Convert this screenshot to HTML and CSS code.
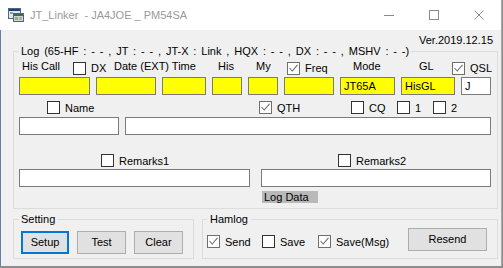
FILE: index.html
```html
<!DOCTYPE html>
<html>
<head>
<meta charset="utf-8">
<link rel="stylesheet" href="styles.css">
</head>
<body>
<div class="window">
  <div class="titlebar">
    <svg class="appicon" width="16" height="16" viewBox="0 0 16 16">
      <rect x="0.5" y="1.5" width="12" height="10" fill="#e3e8ef" stroke="#55657c"/>
      <rect x="1" y="2" width="11" height="2" fill="#1e3d8c"/>
      <rect x="2" y="5" width="3" height="2" fill="#8aa0c0"/>
      <rect x="5.5" y="6.5" width="10" height="8" fill="#cfd6cc" stroke="#55657c"/>
      <rect x="6" y="7" width="9" height="2" fill="#3b6f45"/>
      <rect x="7" y="10" width="3" height="3" fill="#86b884"/>
      <rect x="11" y="10" width="3" height="3" fill="#a9b4a6"/>
    </svg>
    <span class="title">JT_Linker&nbsp; - JA4JOE _ PM54SA</span>
    <div class="controls">
      <span class="ctl"><svg width="10" height="10" viewBox="0 0 10 10"><path d="M0 5.5H10" stroke="#8a8a8a" stroke-width="1"/></svg></span>
      <span class="ctl"><svg width="10" height="10" viewBox="0 0 10 10"><rect x="0.5" y="0.5" width="9" height="9" fill="none" stroke="#8a8a8a"/></svg></span>
      <span class="ctl"><svg width="10" height="10" viewBox="0 0 10 10"><path d="M0.5 0.5L9.5 9.5M9.5 0.5L0.5 9.5" stroke="#8a8a8a" stroke-width="1"/></svg></span>
    </div>
  </div>
  <div class="client">
    <div class="ver">Ver.2019.12.15</div>
    <fieldset class="group log">
      <legend class="loglegend">Log (65-HF : - - , JT : - - , JT-X : Link , HQX : - - , DX : - - , MSHV : - -)</legend>
      <div class="row r1">
        <span class="c-call">His Call</span>
        <span class="c-dx chk"><span class="cb"></span>DX</span>
        <span class="c-date">Date (EXT) Time</span>
        <span class="c-his">His</span>
        <span class="c-my">My</span>
        <span class="c-freq chk"><span class="cb on"><svg width="11" height="11" viewBox="0 0 11 11"><path d="M1.5 5L4.2 8L9.5 1.8" fill="none" stroke="#6e6e6e" stroke-width="1.1"/></svg></span>Freq</span>
        <span class="c-mode">Mode</span>
        <span class="c-gl">GL</span>
        <span class="c-qsl chk"><span class="cb on"><svg width="11" height="11" viewBox="0 0 11 11"><path d="M1.5 5L4.2 8L9.5 1.8" fill="none" stroke="#6e6e6e" stroke-width="1.1"/></svg></span>QSL</span>
      </div>
      <div class="row r2">
        <span class="fld y f1"></span>
        <span class="fld y f2"></span>
        <span class="fld y f3"></span>
        <span class="fld y f4"></span>
        <span class="fld y f5"></span>
        <span class="fld y f6"></span>
        <span class="fld y f7">JT65A</span>
        <span class="fld y f8">HisGL</span>
        <span class="fld f9">J</span>
      </div>
      <div class="row r3">
        <span class="c-name chk"><span class="cb"></span>Name</span>
        <span class="c-qth chk"><span class="cb on"><svg width="11" height="11" viewBox="0 0 11 11"><path d="M1.5 5L4.2 8L9.5 1.8" fill="none" stroke="#6e6e6e" stroke-width="1.1"/></svg></span>QTH</span>
        <span class="c-cq chk"><span class="cb"></span>CQ</span>
        <span class="c-1 chk"><span class="cb"></span>1</span>
        <span class="c-2 chk"><span class="cb"></span>2</span>
      </div>
      <div class="row r4">
        <span class="fld g1"></span>
        <span class="fld g2"></span>
      </div>
      <div class="remarks">
        <div class="rcol">
          <span class="chk center"><span class="cb"></span>Remarks1</span>
          <span class="fld wide"></span>
        </div>
        <div class="rcol">
          <span class="chk center"><span class="cb"></span>Remarks2</span>
          <span class="fld wide"></span>
          <span class="logdata">Log Data</span>
        </div>
      </div>
    </fieldset>
    <div class="bottom">
      <fieldset class="group setting">
        <legend>Setting</legend>
        <div class="btns">
          <button class="btn focus b-setup">Setup</button>
          <button class="btn b-test">Test</button>
          <button class="btn b-clear">Clear</button>
        </div>
      </fieldset>
      <fieldset class="group hamlog">
        <legend>Hamlog</legend>
        <div class="hrow">
          <span class="chk h-send"><span class="cb on"><svg width="11" height="11" viewBox="0 0 11 11"><path d="M1.5 5L4.2 8L9.5 1.8" fill="none" stroke="#6e6e6e" stroke-width="1.1"/></svg></span>Send</span>
          <span class="chk h-save"><span class="cb"></span>Save</span>
          <span class="chk h-msg"><span class="cb on"><svg width="11" height="11" viewBox="0 0 11 11"><path d="M1.5 5L4.2 8L9.5 1.8" fill="none" stroke="#6e6e6e" stroke-width="1.1"/></svg></span>Save(Msg)</span>
          <button class="btn b-resend">Resend</button>
        </div>
      </fieldset>
    </div>
  </div>
</div>
</body>
</html>
```
FILE: styles.css
```css
html, body {
  margin: 0;
  padding: 0;
}
body {
  background: #8e8e8e;
  font-family: "Liberation Sans", Arial, sans-serif;
  font-size: 11px;
  color: #000;
  width: 503px;
  height: 268px;
  overflow: hidden;
}
.window {
  width: 502px;
  height: 266px;
  box-sizing: border-box;
  border-right: 1px solid #a9a9a9;
  background: #f0f0f0;
  display: flex;
  flex-direction: column;
}
.titlebar {
  height: 30px;
  flex-shrink: 0;
  background: #fff;
  display: flex;
  align-items: center;
}
.appicon {
  margin-left: 8px;
  flex-shrink: 0;
}
.title {
  margin-left: 6px;
  color: #9a9a9a;
  font-size: 11px;
  white-space: nowrap;
}
.controls {
  margin-left: auto;
  display: flex;
  height: 30px;
}
.ctl {
  width: 45px;
  height: 30px;
  display: flex;
  align-items: center;
  justify-content: center;
}
.client {
  flex: 1;
  border-left: 1px solid #5b80b0;
  padding: 4px 3px 0 12px;
  box-sizing: border-box;
}
.ver {
  text-align: right;
  line-height: 13px;
  padding-right: 5px;
  margin-bottom: -2px;
}
.group {
  margin: 0;
  border: 1px solid #dcdcdc;
  box-sizing: border-box;
  min-width: 0;
}
.group legend {
  padding: 0 2px;
  line-height: 13px;
  white-space: nowrap;
}
.group .loglegend {
  word-spacing: 1.8px;
}
.log {
  width: 485px;
  padding: 2px 5px 5px 5px;
}
.row {
  display: flex;
}
.chk {
  display: inline-flex;
  align-items: center;
  white-space: nowrap;
}
.cb {
  width: 13px;
  height: 13px;
  box-sizing: border-box;
  border: 1px solid #333;
  background: #fff;
  margin-right: 5px;
  display: inline-flex;
  align-items: center;
  justify-content: center;
  flex-shrink: 0;
}
.cb.on {
  border-color: #6e6e6e;
}
.r1 {
  height: 15px;
  line-height: 13px;
  align-items: flex-start;
}
.r1 > span {
  flex-shrink: 0;
  white-space: nowrap;
}
.r1 .chk {
  margin-top: 2px;
  height: 13px;
  line-height: 13px;
  align-items: flex-start;
}
.c-call { width: 54px; padding-left: 3px; box-sizing: border-box; }
.c-dx { width: 41px; }
.c-date { width: 104px; }
.c-his { width: 38px; }
.c-my { width: 31px; }
.c-freq { width: 66px; }
.c-mode { width: 66px; }
.c-gl { width: 33px; }

.fld {
  display: block;
  height: 18px;
  box-sizing: border-box;
  border: 1px solid #7a7a7a;
  background: #fff;
  padding: 0 3px;
  line-height: 16px;
  white-space: nowrap;
  overflow: hidden;
  flex-shrink: 0;
}
.fld.y {
  background: #ffff00;
}
.r2 {
  margin-top: 2px;
  gap: 6px;
}
.f1 { width: 71px; }
.f2 { width: 60px; }
.f3 { width: 44px; }
.f4 { width: 30px; }
.f5 { width: 30px; }
.f6 { width: 50px; }
.f7 { width: 55px; }
.f8 { width: 54px; }
.f9 { width: 30px; }

.r3 {
  margin-top: 6px;
  height: 13px;
  align-items: center;
}
.c-name { width: 240px; padding-left: 28px; box-sizing: border-box; }
.c-qth { width: 92px; }
.c-cq { width: 46px; }
.c-1 { width: 36px; }
.c-2 { width: 30px; }

.r4 {
  margin-top: 3px;
  gap: 6px;
}
.g1 { width: 100px; }
.g2 { width: 366px; }

.remarks {
  margin-top: 19px;
  display: grid;
  grid-template-columns: 231px 230px;
  column-gap: 11px;
  align-items: start;
}
.rcol {
  display: flex;
  flex-direction: column;
}
.rcol .center {
  align-self: center;
  height: 13px;
  margin-bottom: 2px;
}
.rcol:first-child .center {
  margin-left: 1px;
}
.rcol:last-child .center {
  margin-left: -8px;
}
.fld.wide {
  width: 100%;
}
.logdata {
  align-self: flex-start;
  margin-top: 4px;
  margin-left: 1px;
  width: 56px;
  height: 12px;
  line-height: 12px;
  background: #b9b9b9;
  padding-left: 2px;
  box-sizing: border-box;
  white-space: nowrap;
}

.bottom {
  margin-top: 4px;
  display: flex;
  gap: 8px;
}
.setting {
  width: 181px;
  padding: 5px 5px 4px 5px;
}
.hamlog {
  width: 296px;
  padding: 2px 5px 4px 4px;
}
.hamlog legend {
  padding: 0 3px;
}
.btns {
  display: flex;
  gap: 8px;
  margin-left: 2px;
}
.btn {
  font-family: "Liberation Sans", Arial, sans-serif;
  font-size: 11px;
  color: #000;
  height: 23px;
  padding: 0;
  margin: 0;
  background: #e1e1e1;
  border: 1px solid #adadad;
  border-radius: 0;
  box-sizing: border-box;
  line-height: 21px;
}
.btn.focus {
  border: 2px solid #0078d7;
  line-height: 19px;
}
.b-setup { width: 48px; }
.b-test { width: 49px; }
.b-clear { width: 49px; }
.hrow {
  display: flex;
  align-items: flex-start;
}
.hrow .chk {
  margin-top: 7px;
  height: 13px;
}
.h-send { width: 55px; }
.h-save { width: 56px; }
.h-msg { width: 90px; }
.b-resend { width: 79px; }
```
